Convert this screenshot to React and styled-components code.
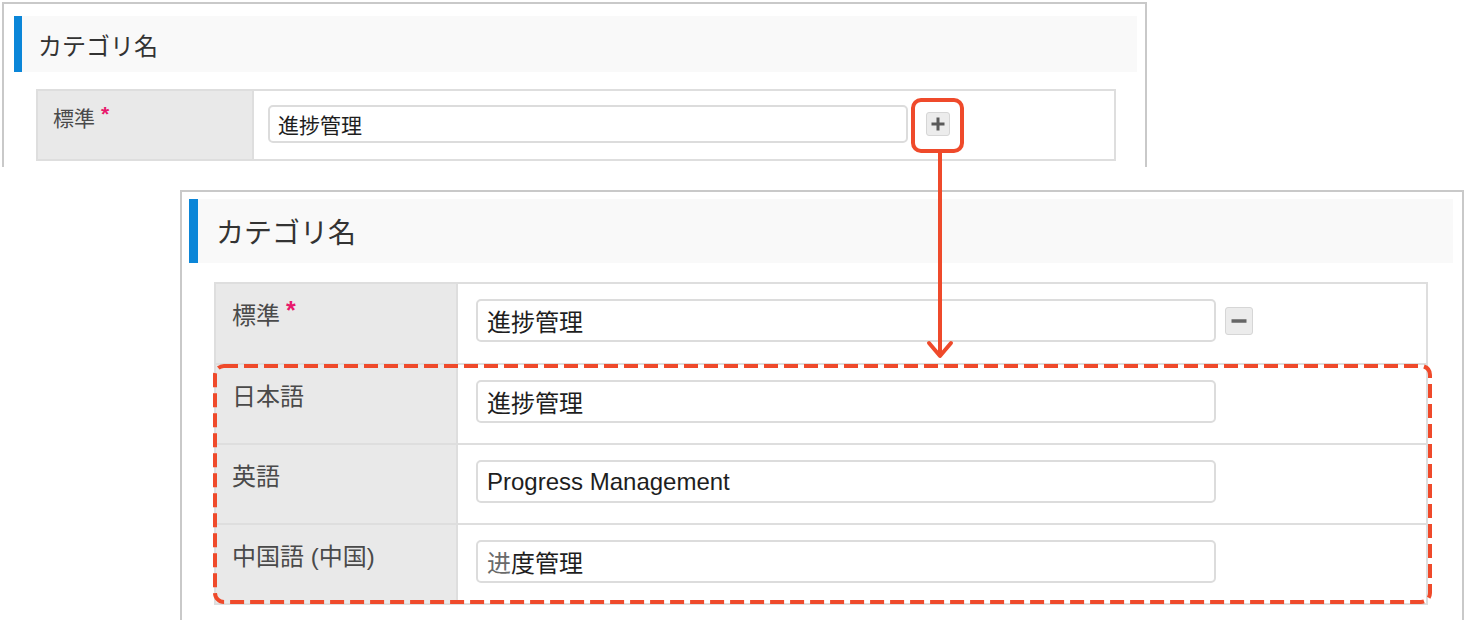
import React from "react";
import styled, { createGlobalStyle } from "styled-components";

const GlobalStyle = createGlobalStyle`
  body {
    margin: 0;
    background: #ffffff;
    font-family: "Liberation Sans", "Noto Sans CJK JP", sans-serif;
  }
`;

const RED = "#ef4a2b";

// the two screenshots differ in scale, so each one gets its own measures
const small = {
  left: 2, top: 2, width: 1145, height: 165,
  headTop: 12, headLeft: 10, headRight: 8, headH: 56, bar: 8, headFont: 24, headPad: 16,
  tableTop: 17, tableLeft: 32, tableW: 1080, labelW: 216, rowH: 68,
  labelPadX: 15, labelPadTop: 13, labelFont: 21, star: 21,
  cellPadX: 14, cellPadTop: 14, inputW: 640, inputH: 38, inputFont: 21, inputPad: 10,
  btnGap: 18, btn: 24,
};

const large = {
  left: 180, top: 190, width: 1284, height: 430,
  headTop: 7, headLeft: 7, headRight: 9, headH: 64, bar: 9, headFont: 28, headPad: 18,
  tableTop: 19, tableLeft: 32, tableW: 1214, labelW: 242, rowH: 79,
  labelPadX: 16, labelPadTop: 15, labelFont: 24, star: 25,
  cellPadX: 18, cellPadTop: 15, inputW: 740, inputH: 43, inputFont: 24, inputPad: 11,
  btnGap: 9, btn: 28,
};

const Canvas = styled.div`
  position: relative;
  width: 1484px;
  height: 620px;
  overflow: hidden;
  background: #fff;
`;

const Shot = styled.div`
  position: absolute;
  left: ${({ $s }) => $s.left}px;
  top: ${({ $s }) => $s.top}px;
  width: ${({ $s }) => $s.width}px;
  height: ${({ $s }) => $s.height}px;
  box-sizing: border-box;
  border: 2px solid #c9c9c9;
  border-bottom: none;
  background: #fff;
  overflow: hidden;
  display: flex;
  flex-direction: column;
`;

const Header = styled.div`
  display: flex;
  align-items: center;
  height: ${({ $s }) => $s.headH}px;
  margin: ${({ $s }) => `${$s.headTop}px ${$s.headRight}px 0 ${$s.headLeft}px`};
  background: #f9f9f9;
  border-left: ${({ $s }) => $s.bar}px solid #0b86d8;
  padding-left: ${({ $s }) => $s.headPad}px;
  font-size: ${({ $s }) => $s.headFont}px;
  color: #333;
`;

const Table = styled.div`
  display: flex;
  flex-direction: column;
  width: ${({ $s }) => $s.tableW}px;
  margin: ${({ $s }) => `${$s.tableTop}px 0 0 ${$s.tableLeft}px`};
  box-sizing: border-box;
  border: 2px solid #dedede;
  flex-shrink: 0;
`;

const Row = styled.div`
  display: flex;
  height: ${({ $s }) => $s.rowH}px;
  box-sizing: border-box;
  & + & {
    height: ${({ $s }) => $s.rowH + 1}px;
    border-top: 2px solid #dedede;
  }
`;

const Label = styled.div`
  width: ${({ $s }) => $s.labelW}px;
  box-sizing: border-box;
  flex-shrink: 0;
  background: #e9e9e9;
  border-right: 2px solid #dedede;
  padding: ${({ $s }) => `${$s.labelPadTop}px ${$s.labelPadX}px 0`};
  font-size: ${({ $s }) => $s.labelFont}px;
  line-height: 1.4;
  color: #4a4a4a;
`;

const Star = styled.span`
  color: #e8196c;
  font-weight: bold;
  font-size: ${({ $s }) => $s.star}px;
  line-height: 1;
  vertical-align: top;
  margin-left: 6px;
  font-family: "Liberation Sans", sans-serif;
  position: relative;
  top: -1px;
`;

const Cell = styled.div`
  flex: 1;
  display: flex;
  align-items: flex-start;
  padding: ${({ $s }) => `${$s.cellPadTop}px ${$s.cellPadX}px 0`};
  gap: ${({ $s }) => $s.btnGap}px;
`;

const Input = styled.div`
  width: ${({ $s }) => $s.inputW}px;
  height: ${({ $s }) => $s.inputH}px;
  box-sizing: border-box;
  border: 2px solid #dcdcdc;
  border-radius: 5px;
  display: flex;
  align-items: center;
  padding-left: ${({ $s }) => $s.inputPad - 2}px;
  font-size: ${({ $s }) => $s.inputFont}px;
  color: #1e1e1e;
  background: #fff;
`;

const Faint = styled.span`
  color: #6a6a6a;
`;

const SquareButton = styled.div`
  width: ${({ $s }) => $s.btn}px;
  height: ${({ $s }) => $s.btn}px;
  margin-top: ${({ $s }) => ($s.inputH - $s.btn) / 2}px;
  box-sizing: border-box;
  border: 1px solid #d6d6d6;
  border-radius: 3px;
  background: #ececec;
  display: flex;
  align-items: center;
  justify-content: center;
`;

const Overlay = styled.svg`
  position: absolute;
  left: 0;
  top: 0;
  pointer-events: none;
`;

const Plus = () => (
  <svg width="16" height="16" viewBox="0 0 16 16">
    <path d="M8 1.5v13M1.5 8h13" stroke="#5a5a5a" strokeWidth="3" />
  </svg>
);

const Minus = () => (
  <svg width="18" height="18" viewBox="0 0 18 18">
    <path d="M1.5 9h15" stroke="#666" strokeWidth="3.5" />
  </svg>
);

const Field = ({ s, label, required, value, button }) => (
  <Row $s={s}>
    <Label $s={s}>
      {label}
      {required && <Star $s={s}>*</Star>}
    </Label>
    <Cell $s={s}>
      <Input $s={s}>{value}</Input>
      {button && <SquareButton $s={s}>{button}</SquareButton>}
    </Cell>
  </Row>
);

export default function App() {
  return (
    <Canvas>
      <GlobalStyle />
      <Shot $s={small}>
        <Header $s={small}>カテゴリ名</Header>
        <Table $s={small}>
          <Field s={small} label="標準" required value="進捗管理" button={<Plus />} />
        </Table>
      </Shot>

      <Shot $s={large}>
        <Header $s={large}>カテゴリ名</Header>
        <Table $s={large}>
          <Field s={large} label="標準" required value="進捗管理" button={<Minus />} />
          <Field s={large} label="日本語" value="進捗管理" />
          <Field s={large} label="英語" value="Progress Management" />
          <Field
            s={large}
            label="中国語 (中国)"
            value={
              <>
                <Faint>进</Faint>度管理
              </>
            }
          />
        </Table>
      </Shot>

      <Overlay width="1484" height="620" viewBox="0 0 1484 620">
        <rect x="913" y="100" width="49" height="51" rx="8" fill="none" stroke={RED} strokeWidth="4" />
        <line x1="940" y1="153" x2="940" y2="355" stroke={RED} strokeWidth="4" />
        <polyline
          points="929,343 940,356 951,343"
          fill="none"
          stroke={RED}
          strokeWidth="4"
          strokeLinecap="round"
          strokeLinejoin="round"
        />
        <rect
          x="215"
          y="366"
          width="1215"
          height="236"
          rx="9"
          fill="none"
          stroke={RED}
          strokeWidth="4"
          strokeDasharray="14 6"
        />
      </Overlay>
    </Canvas>
  );
}
